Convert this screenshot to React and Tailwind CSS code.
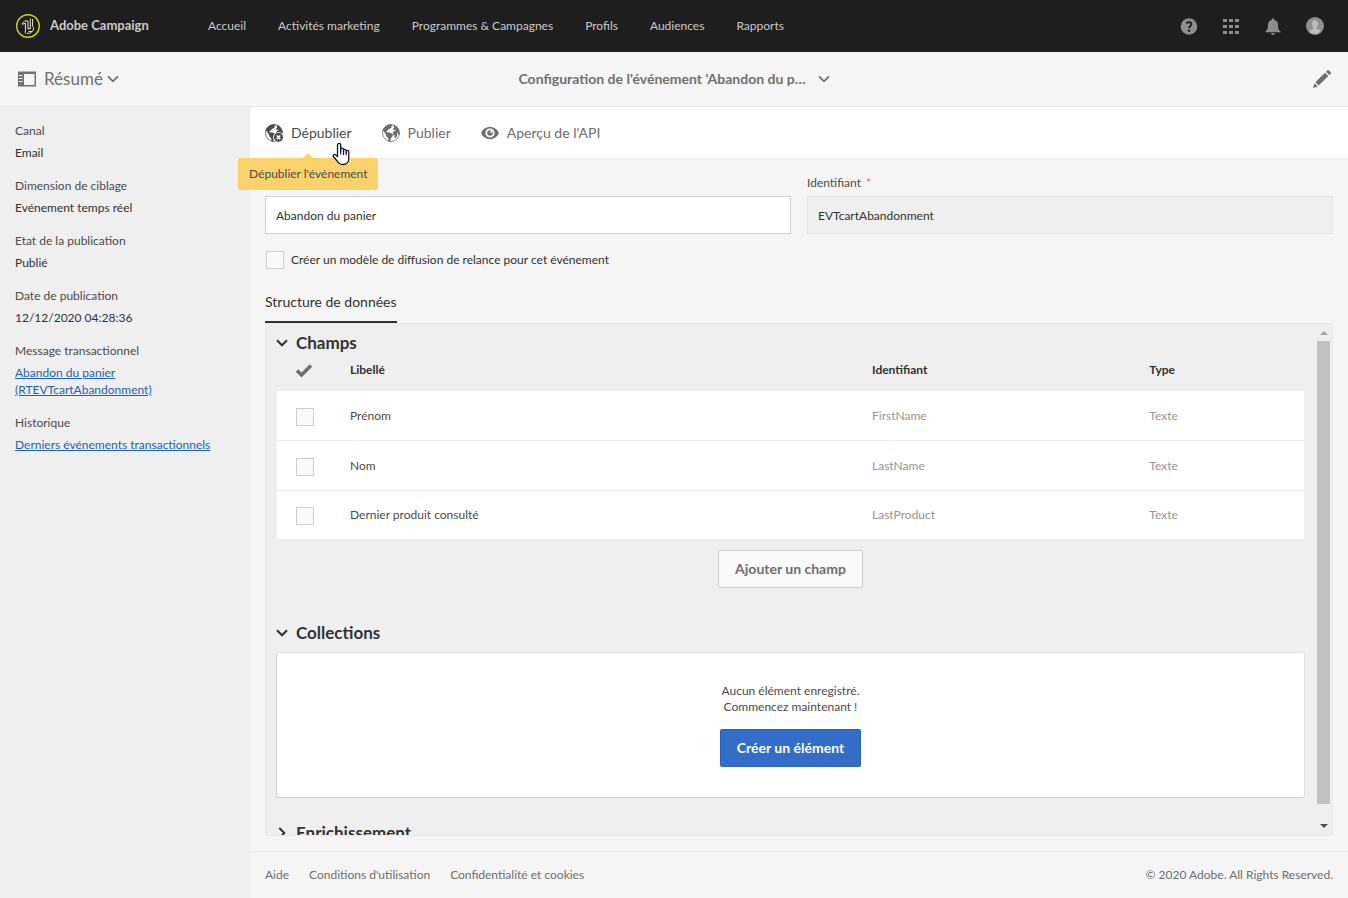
import React from "react";

const nav = ["Accueil", "Activités marketing", "Programmes & Campagnes", "Profils", "Audiences", "Rapports"];

const summary = [
  { label: "Canal", value: "Email" },
  { label: "Dimension de ciblage", value: "Evénement temps réel" },
  { label: "Etat de la publication", value: "Publié" },
  { label: "Date de publication", value: "12/12/2020 04:28:36" },
  { label: "Message transactionnel", value: "Abandon du panier (RTEVTcartAbandonment)", link: true },
  { label: "Historique", value: "Derniers événements transactionnels", link: true },
];

const fields = [
  { label: "Prénom", id: "FirstName", type: "Texte" },
  { label: "Nom", id: "LastName", type: "Texte" },
  { label: "Dernier produit consulté", id: "LastProduct", type: "Texte" },
];

function Chevron({ className = "", width = 2 }) {
  return (
    <svg viewBox="0 0 12 12" className={`size-3 shrink-0 ${className}`} fill="none" stroke="currentColor" strokeWidth={width} aria-hidden="true">
      <path d="M1 3.300 6 8.300 11 3.300" />
    </svg>
  );
}

function Logo() {
  return (
    <svg viewBox="0 0 24 24" className="size-6 shrink-0" fill="none" aria-hidden="true">
      <circle cx="12" cy="12" r="11.300" stroke="#c6de0a" strokeWidth="1.400" />
      <g stroke="#e6e8c4" strokeWidth="1">
        <path d="M6.300 10.500V9.200L8.600 7H12v8.300" />
        <path d="M6.500 10.300 9.400 9.200V19.500" />
        <path d="M14.300 4.500v10.300M16.600 5v7.500l1 1v2.500l-2 1.500h-3" />
        <path d="M11 19.300h2.800l2.600-2M14 14.700h-2.200" />
      </g>
    </svg>
  );
}

function Globe({ badge }) {
  return (
    <svg viewBox="0 0 18 18" className="size-[18px] shrink-0" aria-hidden="true">
      <circle cx="9" cy="9" r="8.500" fill="#fff" stroke="currentColor" strokeWidth="0.800" />
      <path
        fill="currentColor"
        d="M.5 6.800C1.500 3.500 4 1.200 7.500.5l2.300.2.800 1.100-1.400.5.600 1-1.600 1.100-1.300.5-1 1.500-1.600.9.900 1.200 1.700-.3 1.600.9 2 .6.600 1.600-1.100 1.700-1.200 1.300-.2 1.900-1 1.500-1.200-.8-.2-3-1.800-1.500-.5-2L2.800 9 1.700 7.200Z"
      />
      <path
        fill="currentColor"
        d="M12 1.100c2.700 1.200 4.800 3.300 5.300 6.400l-.3 3.700-.9-.5-.4-1.700-.8.500.4 1.800-.9 1.900-1.100 1-.7-.7-.1-2-1.400-1.300-.2-1.900 1.200-1.400 1.400-.3-.3-1-1.600.3-.7-1 1.300-1.300-.6-1.300Z"
      />
      {badge && (
        <>
          <circle cx="13.500" cy="13.300" r="5.400" fill="#fff" />
          <circle cx="13.500" cy="13.300" r="4.500" fill="currentColor" />
          <path d="m11.700 11.500 3.600 3.600m0-3.600-3.600 3.600" stroke="#fff" strokeWidth="1.500" />
        </>
      )}
    </svg>
  );
}

function Eye() {
  return (
    <svg viewBox="0 0 18 18" className="size-[18px] shrink-0" aria-hidden="true">
      <path fill="currentColor" fillRule="evenodd" d="M9 2.800C4.500 2.800.3 6.800.3 9S4.500 15.200 9 15.200 17.700 11.200 17.700 9 13.500 2.800 9 2.800Zm0 1.600a4.600 4.600 0 1 1 0 9.200 4.600 4.600 0 0 1 0-9.200Z" />
      <circle cx="9" cy="9" r="2.800" fill="currentColor" />
      <circle cx="10.300" cy="7.800" r="1.100" fill="#fff" />
    </svg>
  );
}

function HandCursor() {
  return (
    <svg viewBox="0 0 18 24" className="h-6 w-[18px]" aria-hidden="true">
      <path
        d="M5.500 14.500V3a1.600 1.600 0 0 1 3.200 0v5.500-1a1.400 1.400 0 0 1 2.800 0V9.500v-1a1.400 1.400 0 0 1 2.700 0v2-.8a1.300 1.300 0 0 1 2.600 0V16c0 3.500-2 6.500-6 6.500-3.200 0-4.600-1.500-6-4L1.300 14.500c-.8-1.500 1-2.700 2.200-1.700Z"
        fill="#fff"
        stroke="#15152b"
        strokeWidth="1.300"
        strokeLinejoin="round"
      />
      <path d="M8.700 8v4.500M11.500 9v4M14.200 10v3" stroke="#15152b" strokeWidth="1.200" />
    </svg>
  );
}

const checkboxClass = "block size-[18px] shrink-0 appearance-none border border-[#cfcfcf] bg-[#fafafa] checked:bg-[#326ec8]";

function SectionTitle({ children, closed }) {
  return (
    <button type="button" aria-expanded={!closed} className="flex items-center gap-2 px-[10px] text-[17px] leading-6 font-bold text-[#323232]">
      <Chevron className={closed ? "-rotate-90" : ""} />
      <h2>{children}</h2>
    </button>
  );
}

export default function App() {
  return (
    <div className="flex h-screen flex-col bg-[#f5f5f5] font-['Lato','Noto_Sans',sans-serif] text-xs text-[#323232]">
      <header className="flex h-[52px] shrink-0 items-center bg-[#1e1e1e] px-4 text-[#cacaca]">
        <a href="#" className="flex w-[192px] items-center gap-[10px] text-[13px] font-bold">
          <Logo />
          Adobe Campaign
        </a>
        <nav className="flex flex-1 gap-8">
          {nav.map((n) => (
            <a key={n} href="#" className="whitespace-nowrap">{n}</a>
          ))}
        </nav>
        <div className="flex items-center gap-6 pr-2 text-[#8e8e8e]">
          <button type="button" aria-label="Aide">
            <svg viewBox="0 0 18 18" className="size-[18px]" aria-hidden="true">
              <circle cx="9" cy="9.500" r="8.300" fill="currentColor" />
              <path d="M6.300 6.200C8.500 4.500 11.500 5.100 11.400 7.300 11.300 9.200 9 9.300 9 11.300" fill="none" stroke="#1e1e1e" strokeWidth="2" />
              <circle cx="9" cy="13.800" r="1.300" fill="#1e1e1e" />
            </svg>
          </button>
          <button type="button" aria-label="Applications">
            <svg viewBox="0 0 18 18" className="size-[18px]" fill="currentColor" aria-hidden="true">
              {[2, 8, 14].map((y) => [1, 7, 13].map((x) => <rect key={`${x}-${y}`} x={x} y={y} width="4" height="3" />))}
            </svg>
          </button>
          <button type="button" aria-label="Notifications">
            <svg viewBox="0 0 18 18" className="size-[18px]" fill="currentColor" aria-hidden="true">
              <path d="M8 2.700V1.500h2v1.200c3 .6 4 2.800 4 5 0 4 .8 5.300 2.500 6.800v.7h-15v-.7C3.200 13 4 11.700 4 7.700c0-2.200 1-4.400 4-5ZM7 16.300h4c0 2.300-4 2.300-4 0Z" />
            </svg>
          </button>
          <button type="button" aria-label="Compte">
            <svg viewBox="0 0 18 18" className="size-[18px]" aria-hidden="true">
              <circle cx="9" cy="9" r="9" fill="#919191" />
              <path d="M9 3.300c2 0 3 1.400 3 3.500 0 1.700-.7 2.700-1.200 3.500v1.500c1.500.6 3.200 1.200 3.800 2.600A8 8 0 0 1 9 17a8 8 0 0 1-5.600-2.600c.6-1.400 2.300-2 3.800-2.600v-1.500C6.700 9.500 6 8.500 6 6.800c0-2.100 1-3.500 3-3.500Z" fill="#bdbdbd" />
            </svg>
          </button>
        </div>
      </header>

      <div className="grid h-[55px] shrink-0 grid-cols-[1fr_auto_1fr] items-center border-b border-[#eaeaea] px-4 text-[#707070]">
        <button type="button" className="flex items-center gap-1 justify-self-start text-[17px]">
          <svg viewBox="0 0 20 18" className="mr-1 h-[18px] w-5" aria-hidden="true">
            <path fill="currentColor" fillRule="evenodd" d="M2 1.500h18v15H2ZM8 4v11h10.500V4ZM3 5h3.500v1H3Zm0 3h3.500v1H3Zm0 3h3.500v1H3Z" />
          </svg>
          Résumé
          <Chevron width={1.8} />
        </button>
        <button type="button" className="flex items-center gap-3 text-sm font-bold">
          <h1>Configuration de l'événement 'Abandon du p…</h1>
          <Chevron width={1.8} />
        </button>
        <button type="button" aria-label="Modifier" className="justify-self-end">
          <svg viewBox="0 0 20 20" className="size-5" fill="currentColor" aria-hidden="true">
            <path d="m1 19 1.600-4.800 3.200 3.200ZM3.400 13.300 13 3.700 16.300 7l-9.600 9.600ZM14 2.700l1.500-1.500q.6-.6 1.200 0l2.100 2.100q.6.600 0 1.200L17.300 6Z" />
          </svg>
        </button>
      </div>

      <div className="flex min-h-0 flex-1">
        <aside className="w-[250px] shrink-0 border-r border-[#eaeaea] bg-[#efefef] px-[15px] pt-[15px]">
          <dl className="flex flex-col gap-4">
            {summary.map((s) => (
              <div key={s.label} className="flex flex-col gap-[5px] leading-[17px]">
                <dt className="text-[#4b4b4b]">{s.label}</dt>
                <dd className="w-[200px]">
                  {s.link ? <a href="#" className="text-[#1e5fbf] underline">{s.value}</a> : s.value}
                </dd>
              </div>
            ))}
          </dl>
        </aside>

        <main className="flex min-w-0 flex-1 flex-col">
          <div className="flex h-[52px] shrink-0 items-center gap-[30px] border-b border-[#eaeaea] bg-white px-[15px] text-sm text-[#6e6e6e]">
            <div className="relative">
              <button type="button" aria-describedby="unpublish-tip" className="flex items-center gap-2 text-[#4b4b4b]">
                <Globe badge />
                Dépublier
              </button>
              <div id="unpublish-tip" role="tooltip" className="absolute top-[35px] left-1/2 z-10 flex h-8 w-[140px] -translate-x-1/2 items-center justify-center rounded-[3px] bg-[#fad26c] text-xs whitespace-nowrap text-[#4b4b4b]">
                <svg viewBox="0 0 10 5" className="absolute -top-[5px] left-[65px] h-[5px] w-[10px]" fill="#fad26c" aria-hidden="true"><path d="M0 5 5 0l5 5Z" /></svg>
                Dépublier l'événement
              </div>
              <div className="absolute top-[19px] right-[2px] z-20"><HandCursor /></div>
            </div>
            <button type="button" className="flex items-center gap-2"><Globe />Publier</button>
            <button type="button" className="flex items-center gap-2"><Eye />Aperçu de l'API</button>
          </div>

          <div className="flex min-h-0 flex-1 flex-col px-[15px] pt-[15px] pb-[15px]">
            <div className="grid grid-cols-2 items-end gap-4">
              <input aria-label="Libellé" defaultValue="Abandon du panier" className="h-[38px] border border-[#d0d0d0] bg-white px-[10px]" />
              <div className="flex flex-col gap-1">
                <label htmlFor="ident" className="leading-[18px] text-[#4b4b4b]">Identifiant <span className="pl-[2px] font-bold text-[#f2835f]">*</span></label>
                <input id="ident" readOnly defaultValue="EVTcartAbandonment" className="h-[38px] border border-[#e4e4e4] bg-[#efefef] px-[10px]" />
              </div>
            </div>
            <label className="mt-[17px] flex items-center gap-[7px] self-start pl-px">
              <input type="checkbox" className={checkboxClass} />
              Créer un modèle de diffusion de relance pour cet événement
            </label>

            <div role="tablist" className="mt-[14px] flex text-sm">
              <button type="button" role="tab" aria-selected="true" className="h-10 border-b-2 border-[#323232]">Structure de données</button>
            </div>

            <div className="flex min-h-0 flex-1 rounded-[3px] border border-[#e8e8e8] bg-[#efefef]">
              <div className="min-w-0 flex-1 overflow-hidden pt-[7px] pr-[10px]">
                <SectionTitle>Champs</SectionTitle>
                <div className="mr-px pl-[11px]">
                  <table className="w-full table-fixed border-separate border-spacing-0 text-left">
                    <colgroup>
                      <col className="w-[73px]" />
                      <col className="w-[522px]" />
                      <col className="w-[27%]" />
                      <col />
                    </colgroup>
                    <thead>
                      <tr className="h-9 *:pb-[6px]">
                        <th className="pl-[18px]">
                          <svg viewBox="0 0 18 18" className="size-[18px]" fill="none" stroke="#6e6e6e" strokeWidth="3.400" role="img" aria-label="Sélection"><path d="M2 9.500 6.500 14 16 4.500" /></svg>
                        </th>
                        <th className="font-bold">Libellé</th>
                        <th className="font-bold">Identifiant</th>
                        <th className="font-bold">Type</th>
                      </tr>
                    </thead>
                    <tbody className="bg-white">
                      {fields.map((f) => (
                        <tr key={f.id} className="h-[50px] text-[#959595] *:border-b *:border-[#eaeaea] last:h-[49px]">
                          <td className="pt-[2px] pl-[19px]"><input type="checkbox" aria-label={f.label} className={checkboxClass} /></td>
                          <td className="text-[#4b4b4b]">{f.label}</td>
                          <td>{f.id}</td>
                          <td>{f.type}</td>
                        </tr>
                      ))}
                    </tbody>
                  </table>
                </div>
                <div className="mt-[10px] flex justify-center pl-[10px]">
                  <button type="button" className="h-[38px] rounded-[2px] border border-[#cfcfcf] bg-[#fafafa] px-4 text-sm font-bold text-[#6e6e6e]">Ajouter un champ</button>
                </div>
                <div className="mt-[33px]"><SectionTitle>Collections</SectionTitle></div>
                <div className="mt-[7px] ml-[10px] flex h-[146px] flex-col items-center justify-center rounded-[3px] border border-[#e4e4e4] border-b-[#cfcfcf] border-l-[#cfcfcf] bg-white">
                  <p className="text-center leading-4 text-[#4b4b4b]">Aucun élément enregistré.<br />Commencez maintenant !</p>
                  <button type="button" className="mt-[14px] h-[38px] rounded-[2px] border border-[#2762b8] bg-[#326ec8] px-4 text-sm font-bold text-white">Créer un élément</button>
                </div>
                <div className="mt-[23px]"><SectionTitle closed>Enrichissement</SectionTitle></div>
              </div>
              <div className="flex w-[17px] shrink-0 flex-col items-center pr-px pl-px" aria-hidden="true">
                <svg viewBox="0 0 8 4" className="mt-[7px] mb-[6px] h-1 w-2" fill="#a3a3a3"><path d="M0 4 4 0l4 4Z" /></svg>
                <div className="mb-5 w-[13px] flex-1 bg-[#c1c1c1]" />
                <svg viewBox="0 0 8 4" className="mb-[7px] h-1 w-2" fill="#505050"><path d="M0 0 4 4l4-4Z" /></svg>
              </div>
            </div>
          </div>

          <footer className="flex h-[47px] shrink-0 items-center justify-between border-t border-[#e8e8e8] px-[15px] text-[#6e6e6e]">
            <nav className="flex gap-5">
              <a href="#">Aide</a>
              <a href="#">Conditions d'utilisation</a>
              <a href="#">Confidentialité et cookies</a>
            </nav>
            <p>© 2020 Adobe. All Rights Reserved.</p>
          </footer>
        </main>
      </div>
    </div>
  );
}
